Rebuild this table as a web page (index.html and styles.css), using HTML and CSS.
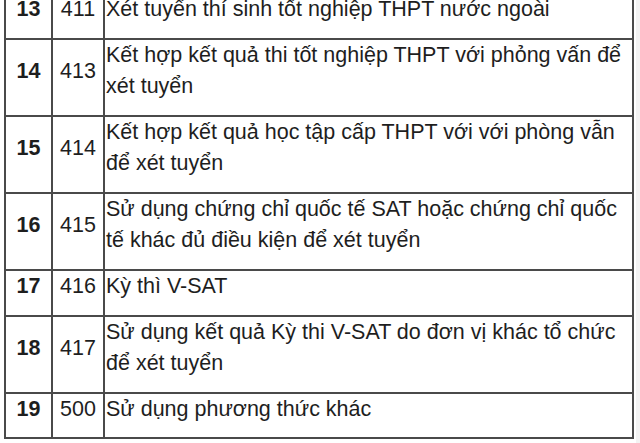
FILE: index.html
```html
<!DOCTYPE html>
<html lang="vi">
<head>
<meta charset="utf-8">
<link rel="stylesheet" href="styles.css">
</head>
<body>
<div class="page">
  <div class="content">
    <table class="methods">
      <colgroup><col class="c-no"><col class="c-code"><col class="c-desc"></colgroup>
      <tr><td class="no">13</td><td class="code">411</td><td class="desc">Xét tuyển thí sinh tốt nghiệp THPT nước ngoài</td></tr>
      <tr><td class="no">14</td><td class="code">413</td><td class="desc">Kết hợp kết quả thi tốt nghiệp THPT với phỏng vấn để xét tuyển</td></tr>
      <tr><td class="no">15</td><td class="code">414</td><td class="desc">Kết hợp kết quả học tập cấp THPT với với phòng vẫn để xét tuyển</td></tr>
      <tr><td class="no">16</td><td class="code">415</td><td class="desc">Sử dụng chứng chỉ quốc tế SAT hoặc chứng chỉ quốc tế khác đủ điều kiện để xét tuyển</td></tr>
      <tr><td class="no">17</td><td class="code">416</td><td class="desc">Kỳ thì V-SAT</td></tr>
      <tr><td class="no">18</td><td class="code">417</td><td class="desc">Sử dụng kết quả Kỳ thi V-SAT do đơn vị khác tổ chức để xét tuyển</td></tr>
      <tr><td class="no">19</td><td class="code">500</td><td class="desc">Sử dụng phương thức khác</td></tr>
    </table>
  </div>
  <div class="edge"></div>
</div>
</body>
</html>
```
FILE: styles.css
```css
html, body {
  margin: 0;
  padding: 0;
  background: #ffffff;
}
.page {
  display: flex;
  width: 640px;
  height: 443px;
  overflow: hidden;
}
.content {
  width: 636px;
  flex: none;
  background: #ffffff;
  padding-left: 4px;
  box-sizing: border-box;
}
.edge {
  flex: 1;
  background: #f3f3f3;
}
.methods {
  border-collapse: collapse;
  margin-top: -8px;
  width: 630px;
  table-layout: fixed;
  font-family: "Liberation Sans", Arial, Helvetica, sans-serif;
  font-size: 21.5px;
  line-height: 31px;
  color: #1e1e1e;
}
.c-no { width: 47px; }
.c-code { width: 52px; }
.methods td {
  border: 2px solid #4a4a4a;
  padding: 0 0 13px 0;
}
.methods tr:last-child td {
  padding-bottom: 12px;
}
.no {
  font-weight: bold;
  text-align: center;
  vertical-align: middle;
}
.code {
  text-align: center;
  vertical-align: middle;
}
.desc {
  vertical-align: top;
  padding-left: 1px !important;
}
```
